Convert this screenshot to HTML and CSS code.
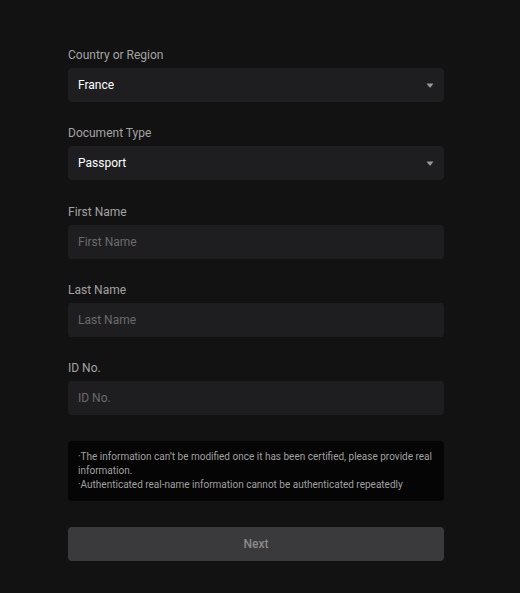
FILE: index.html
```html
<!DOCTYPE html>
<html>
<head>
<meta charset="utf-8">
<link rel="stylesheet" href="styles.css">
</head>
<body>
<div class="form">
  <div class="field">
    <div class="label">Country or Region</div>
    <div class="control select"><span class="value">France</span><svg class="caret" width="8" height="5" viewBox="0 0 8 5"><path d="M0.5 0.5h7L4.6 4.2a0.8 0.8 0 0 1-1.2 0z" fill="#9a9a9a"/></svg></div>
  </div>
  <div class="field">
    <div class="label">Document Type</div>
    <div class="control select"><span class="value">Passport</span><svg class="caret" width="8" height="5" viewBox="0 0 8 5"><path d="M0.5 0.5h7L4.6 4.2a0.8 0.8 0 0 1-1.2 0z" fill="#9a9a9a"/></svg></div>
  </div>
  <div class="field">
    <div class="label">First Name</div>
    <div class="control"><span class="placeholder">First Name</span></div>
  </div>
  <div class="field">
    <div class="label">Last Name</div>
    <div class="control"><span class="placeholder">Last Name</span></div>
  </div>
  <div class="field">
    <div class="label">ID No.</div>
    <div class="control"><span class="placeholder">ID No.</span></div>
  </div>
  <div class="notice">
    <p>·The information can’t be modified once it has been certified, please provide real information.</p>
    <p>·Authenticated real-name information cannot be authenticated repeatedly</p>
  </div>
  <div class="btn">Next</div>
</div>
</body>
</html>
```
FILE: styles.css
```css
html, body {
  margin: 0;
  padding: 0;
  background: #121212;
  font-family: Roboto, "Noto Sans", sans-serif;
}
.form {
  width: 376px;
  margin-left: 68px;
  padding-top: 45px;
  display: flex;
  flex-direction: column;
}
.field {
  display: flex;
  flex-direction: column;
  gap: 3px;
  margin-bottom: 21.3px;
}
.label {
  color: #a3a3a3;
  font-size: 12px;
  line-height: 20px;
  height: 20px;
}
.control {
  height: 34px;
  background: #1e1e20;
  border-radius: 4px;
  display: flex;
  align-items: center;
  padding: 0 10px;
  box-sizing: border-box;
  font-size: 12px;
}
.select {
  justify-content: space-between;
}
.value {
  color: #ffffff;
}
.placeholder {
  color: #6a6a6c;
}
.notice {
  margin-top: 5px;
  background: #050505;
  border-radius: 4px;
  padding: 9px 10px 9px;
  color: #a0a0a0;
  font-size: 10px;
  line-height: 14px;
}
.notice p {
  margin: 0;
}
.btn {
  margin-top: 26px;
  height: 34px;
  background: #3a3a3c;
  border-radius: 4px;
  color: #8a8a8a;
  font-size: 12px;
  font-weight: 500;
  display: flex;
  align-items: center;
  justify-content: center;
}
```
